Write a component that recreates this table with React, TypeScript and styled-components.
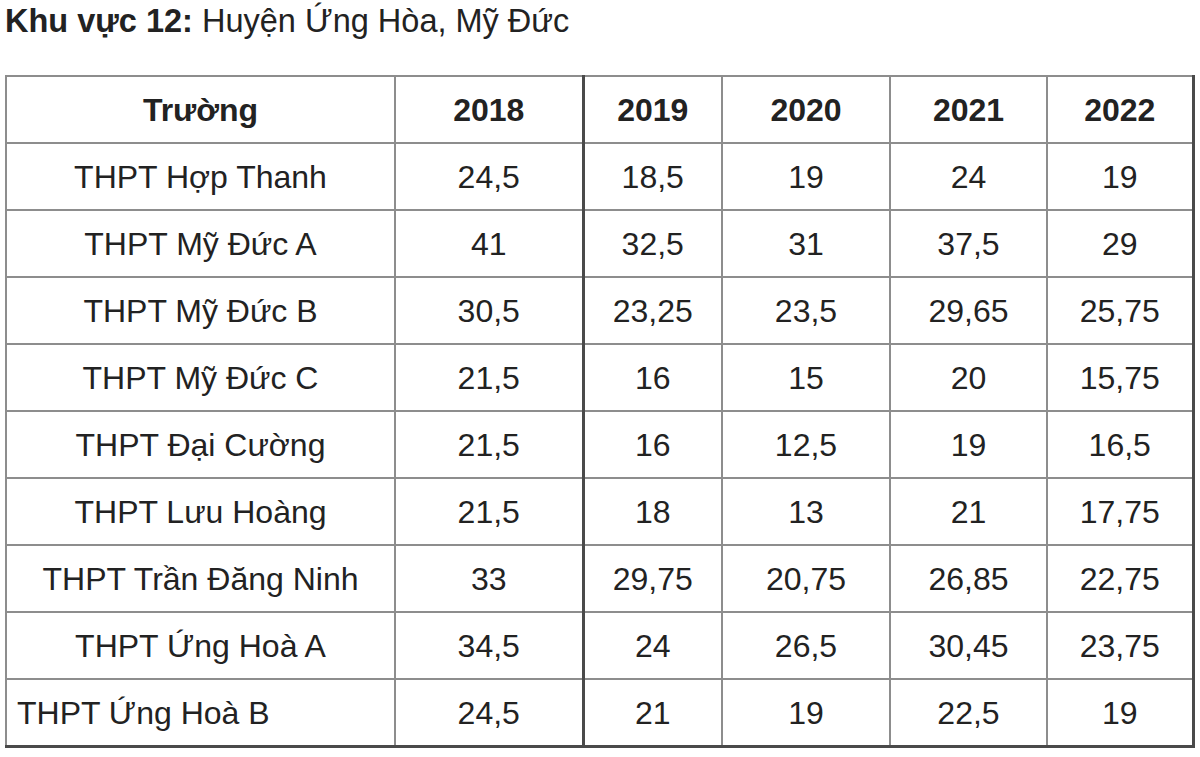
import React from 'react';
import styled, { createGlobalStyle } from 'styled-components';

const GlobalStyle = createGlobalStyle`
  html, body {
    margin: 0;
    padding: 0;
    background: #ffffff;
    overflow: hidden;
  }
  body {
    font-family: "Liberation Sans", Arial, sans-serif;
    color: #222222;
  }
`;

const Page = styled.div`
  width: 1200px;
  height: 757px;
  padding: 1px 0 0 5px;
  box-sizing: border-box;
`;

const Title = styled.div`
  font-size: 32.5px;
  line-height: 40px;
  color: #222;
  margin-bottom: 34px;
`;

const Strong = styled.b`
  font-weight: 700;
`;

const Table = styled.table`
  border-collapse: collapse;
  table-layout: fixed;
  width: 1188px;
`;

const Cell = styled.td<{ $left?: boolean; $head?: boolean; $thick?: boolean }>`
  height: 65px;
  padding: 0 0 0 ${p => (p.$left ? '10px' : '0')};
  border: 2px solid #8d8d8d;
  border-right: ${p => (p.$thick ? '3px solid #4a4a4a' : '2px solid #8d8d8d')};
  text-align: ${p => (p.$left ? 'left' : 'center')};
  vertical-align: middle;
  font-size: 32px;
  line-height: 36px;
  font-weight: ${p => (p.$head ? 700 : 400)};
  color: #222;
  white-space: nowrap;
  &:last-child {
    border-right: 3px solid #4a4a4a;
  }
`;

const Row = styled.tr<{ $last?: boolean }>`
  ${p => (p.$last ? 'td { border-bottom: 3px solid #4a4a4a; }' : '')}
`;

const widths = [389, 188, 139, 168, 157, 146];
const years = ['2018', '2019', '2020', '2021', '2022'];

const rows: { name: string; scores: string[]; left?: boolean }[] = [
  { name: 'THPT Hợp Thanh', scores: ['24,5', '18,5', '19', '24', '19'] },
  { name: 'THPT Mỹ Đức A', scores: ['41', '32,5', '31', '37,5', '29'] },
  { name: 'THPT Mỹ Đức B', scores: ['30,5', '23,25', '23,5', '29,65', '25,75'] },
  { name: 'THPT Mỹ Đức C', scores: ['21,5', '16', '15', '20', '15,75'] },
  { name: 'THPT Đại Cường', scores: ['21,5', '16', '12,5', '19', '16,5'] },
  { name: 'THPT Lưu Hoàng', scores: ['21,5', '18', '13', '21', '17,75'] },
  { name: 'THPT Trần Đăng Ninh', scores: ['33', '29,75', '20,75', '26,85', '22,75'] },
  { name: 'THPT Ứng Hoà A', scores: ['34,5', '24', '26,5', '30,45', '23,75'] },
  { name: 'THPT Ứng Hoà B', scores: ['24,5', '21', '19', '22,5', '19'], left: true },
];

function App() {
  return (
    <>
      <GlobalStyle />
      <Page>
        <Title>
          <Strong>Khu vực 12:</Strong> Huyện Ứng Hòa, Mỹ Đức
        </Title>
        <Table>
          <colgroup>
            {widths.map((w, i) => (
              <col key={i} style={{ width: w }} />
            ))}
          </colgroup>
          <thead>
            <Row>
              <Cell as="th" $head>Trường</Cell>
              {years.map((y, i) => (
                <Cell as="th" $head $thick={i === 0} key={y}>
                  {y}
                </Cell>
              ))}
            </Row>
          </thead>
          <tbody>
            {rows.map((r, ri) => (
              <Row key={r.name} $last={ri === rows.length - 1}>
                <Cell $left={r.left}>{r.name}</Cell>
                {r.scores.map((s, i) => (
                  <Cell $thick={i === 0} key={i}>
                    {s}
                  </Cell>
                ))}
              </Row>
            ))}
          </tbody>
        </Table>
      </Page>
    </>
  );
}

export default App;
